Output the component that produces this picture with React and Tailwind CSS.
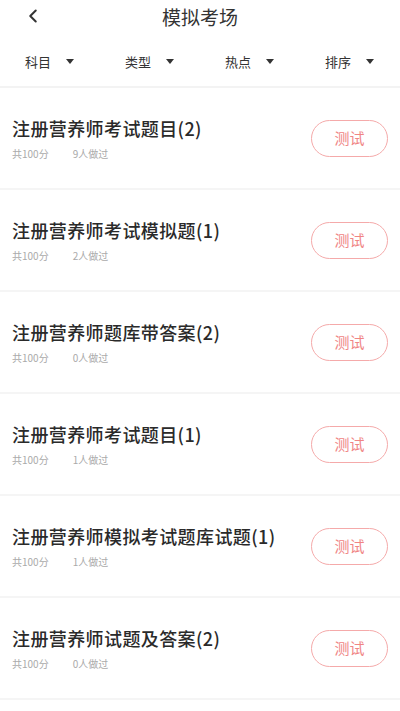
import { ChevronLeft } from 'lucide-react'

const filters = ['科目', '类型', '热点', '排序']

const exams = [
  { title: '注册营养师考试题目(2)', done: 9 },
  { title: '注册营养师考试模拟题(1)', done: 2 },
  { title: '注册营养师题库带答案(2)', done: 0 },
  { title: '注册营养师考试题目(1)', done: 1 },
  { title: '注册营养师模拟考试题库试题(1)', done: 1 },
  { title: '注册营养师试题及答案(2)', done: 0 },
]

function Caret() {
  return (
    <svg width="8" height="5" viewBox="0 0 8 5" className="fill-[#333]">
      <path d="M0 0h8L4 5z" />
    </svg>
  )
}

export default function App() {
  return (
    <div
      className="w-[400px] h-[711px] overflow-hidden bg-white text-[#333]"
      style={{ fontFamily: '"Noto Sans CJK SC", "Noto Sans", sans-serif' }}
    >
      {/* Header */}
      <div className="relative h-[36px] flex items-start justify-center pt-[7px]">
        <ChevronLeft className="absolute left-[22px] top-[5px]" size={22} strokeWidth={2.2} color="#333" />
        <span className="text-[19px] leading-[20px]">模拟考场</span>
      </div>

      {/* Filters */}
      <div className="grid grid-cols-4 h-[52px] border-b-2 border-[#f3f3f3]">
        {filters.map((f) => (
          <div key={f} className="flex items-center justify-center gap-[15px] pr-[1px] pt-[1px]">
            <span className="text-[13px]">{f}</span>
            <Caret />
          </div>
        ))}
      </div>

      {/* List */}
      {exams.map((e, i) => (
        <div key={i} className="h-[102px] flex items-center justify-between px-[12px] border-b-2 border-[#f5f5f5]">
          <div className="flex flex-col self-start pt-[29px]">
            <span className="text-[18px] leading-[22px] tracking-[0.4px] font-medium text-[#2a2a2a]">{e.title}</span>
            <div className="flex gap-[24px] mt-[8px] text-[10px] leading-[14px] text-[#aaa]">
              <span>共100分</span>
              <span>{e.done}人做过</span>
            </div>
          </div>
          <button className="w-[77px] h-[37px] rounded-full border-[1.5px] border-[#f5aaaa] text-[15px] text-[#f08585] flex items-center justify-center">
            测试
          </button>
        </div>
      ))}
    </div>
  )
}
